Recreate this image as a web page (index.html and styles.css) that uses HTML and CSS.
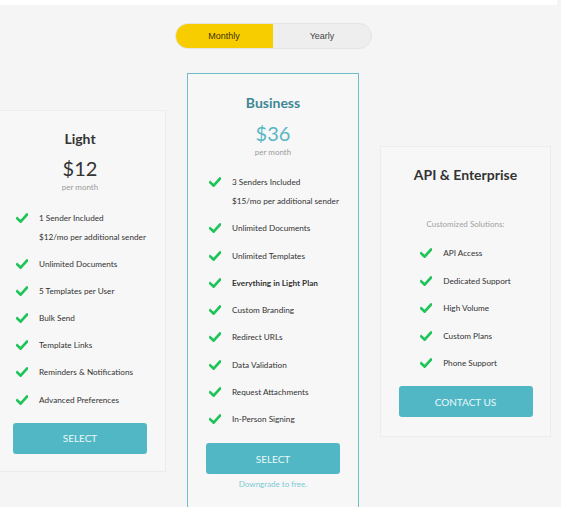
FILE: index.html
```html
<!DOCTYPE html>
<html lang="en">
<head>
<meta charset="utf-8">
<title>Pricing</title>
<link rel="stylesheet" href="styles.css">
</head>
<body>
<div class="topbar"></div>
<div class="page">
  <div class="toggle">
    <span class="opt opt-active">Monthly</span>
    <span class="opt">Yearly</span>
  </div>
  <div class="plans">
    <section class="plan plan-light">
      <h2 class="plan-title">Light</h2>
      <div class="price">$12</div>
      <div class="period">per month</div>
      <ul class="features">
        <li><svg class="check" viewBox="0 0 12 10"><path d="M1.2 5.4 L4.6 8.6 L11 1.6"/></svg><div><div>1 Sender Included</div><div class="sub">$12/mo per additional sender</div></div></li>
        <li><svg class="check" viewBox="0 0 12 10"><path d="M1.2 5.4 L4.6 8.6 L11 1.6"/></svg><div>Unlimited Documents</div></li>
        <li><svg class="check" viewBox="0 0 12 10"><path d="M1.2 5.4 L4.6 8.6 L11 1.6"/></svg><div>5 Templates per User</div></li>
        <li><svg class="check" viewBox="0 0 12 10"><path d="M1.2 5.4 L4.6 8.6 L11 1.6"/></svg><div>Bulk Send</div></li>
        <li><svg class="check" viewBox="0 0 12 10"><path d="M1.2 5.4 L4.6 8.6 L11 1.6"/></svg><div>Template Links</div></li>
        <li><svg class="check" viewBox="0 0 12 10"><path d="M1.2 5.4 L4.6 8.6 L11 1.6"/></svg><div>Reminders &amp; Notifications</div></li>
        <li><svg class="check" viewBox="0 0 12 10"><path d="M1.2 5.4 L4.6 8.6 L11 1.6"/></svg><div>Advanced Preferences</div></li>
      </ul>
      <button class="btn">SELECT</button>
    </section>

    <section class="plan plan-business">
      <h2 class="plan-title">Business</h2>
      <div class="price">$36</div>
      <div class="period">per month</div>
      <ul class="features">
        <li><svg class="check" viewBox="0 0 12 10"><path d="M1.2 5.4 L4.6 8.6 L11 1.6"/></svg><div><div>3 Senders Included</div><div class="sub">$15/mo per additional sender</div></div></li>
        <li><svg class="check" viewBox="0 0 12 10"><path d="M1.2 5.4 L4.6 8.6 L11 1.6"/></svg><div>Unlimited Documents</div></li>
        <li><svg class="check" viewBox="0 0 12 10"><path d="M1.2 5.4 L4.6 8.6 L11 1.6"/></svg><div>Unlimited Templates</div></li>
        <li><svg class="check" viewBox="0 0 12 10"><path d="M1.2 5.4 L4.6 8.6 L11 1.6"/></svg><div class="strong">Everything in Light Plan</div></li>
        <li><svg class="check" viewBox="0 0 12 10"><path d="M1.2 5.4 L4.6 8.6 L11 1.6"/></svg><div>Custom Branding</div></li>
        <li><svg class="check" viewBox="0 0 12 10"><path d="M1.2 5.4 L4.6 8.6 L11 1.6"/></svg><div>Redirect URLs</div></li>
        <li><svg class="check" viewBox="0 0 12 10"><path d="M1.2 5.4 L4.6 8.6 L11 1.6"/></svg><div>Data Validation</div></li>
        <li><svg class="check" viewBox="0 0 12 10"><path d="M1.2 5.4 L4.6 8.6 L11 1.6"/></svg><div>Request Attachments</div></li>
        <li><svg class="check" viewBox="0 0 12 10"><path d="M1.2 5.4 L4.6 8.6 L11 1.6"/></svg><div>In-Person Signing</div></li>
      </ul>
      <button class="btn">SELECT</button>
      <a class="downgrade" href="#">Downgrade to free.</a>
    </section>

    <section class="plan plan-enterprise">
      <h2 class="plan-title">API &amp; Enterprise</h2>
      <div class="custom">Customized Solutions:</div>
      <ul class="features features-centered">
        <li><svg class="check" viewBox="0 0 12 10"><path d="M1.2 5.4 L4.6 8.6 L11 1.6"/></svg><div>API Access</div></li>
        <li><svg class="check" viewBox="0 0 12 10"><path d="M1.2 5.4 L4.6 8.6 L11 1.6"/></svg><div>Dedicated Support</div></li>
        <li><svg class="check" viewBox="0 0 12 10"><path d="M1.2 5.4 L4.6 8.6 L11 1.6"/></svg><div>High Volume</div></li>
        <li><svg class="check" viewBox="0 0 12 10"><path d="M1.2 5.4 L4.6 8.6 L11 1.6"/></svg><div>Custom Plans</div></li>
        <li><svg class="check" viewBox="0 0 12 10"><path d="M1.2 5.4 L4.6 8.6 L11 1.6"/></svg><div>Phone Support</div></li>
      </ul>
      <button class="btn">CONTACT US</button>
    </section>
  </div>
</div>
</body>
</html>
```

FILE: styles.css
```css
* { box-sizing: border-box; }

html, body {
  margin: 0;
  padding: 0;
  background: #f5f5f5;
  font-family: Lato, "Open Sans", "Liberation Sans", sans-serif;
  color: #333;
  overflow: hidden;
}

.topbar {
  width: 557px;
  height: 5px;
  background: #ffffff;
}

.page {
  width: 547px;
  padding-top: 18px;
}

.toggle {
  display: flex;
  width: 197px;
  height: 26px;
  margin: 0 auto;
  border-radius: 13px;
  overflow: hidden;
  background: #eeeeee;
  border: 1px solid #e4e4e4;
  font-family: "Liberation Sans", Arial, sans-serif;
  font-size: 9px;
}

.opt {
  flex: 1;
  display: flex;
  align-items: center;
  justify-content: center;
  color: #444;
}

.opt-active {
  background: #f8cd00;
  color: #3a3300;
  margin: -1px 0 -1px -1px;
}

.plans {
  display: flex;
  align-items: flex-start;
  gap: 21px;
  margin-top: 24px;
  margin-left: -6px;
}

.plan {
  flex: none;
  width: 172px;
  background: #f7f7f7;
  border: 1px solid #ececec;
  text-align: center;
  padding: 19px 0 17px;
}

.plan-light { margin-top: 37px; }

.plan-business {
  border: 1.5px solid #6fbeca;
  padding-top: 20px;
  padding-bottom: 60px;
}

.plan-enterprise {
  width: 171px;
  margin-top: 73px;
  padding-bottom: 19px;
}

.plan-title {
  margin: 0;
  font-size: 14px;
  line-height: 18px;
  font-weight: 700;
  color: #333;
}

.plan-business .plan-title { color: #3e8895; }

.price {
  margin-top: 8px;
  font-size: 20px;
  line-height: 24px;
  color: #333;
}

.plan-business .price {
  color: #59b6c4;
  margin-top: 9px;
}

.period {
  margin-top: 2px;
  font-size: 8px;
  line-height: 10px;
  color: #9a9a9a;
}

.custom {
  margin-top: 35px;
  font-size: 8px;
  line-height: 10px;
  color: #a0a0a0;
}

.features {
  list-style: none;
  margin: 19px 0 0;
  padding: 0 0 0 21px;
  text-align: left;
  font-size: 8.2px;
  line-height: 12px;
  color: #333;
}

.plan-light .features { margin-top: 20px; }

.features li {
  display: flex;
  align-items: flex-start;
  gap: 11px;
  margin-bottom: 15.3px;
}

.features li:last-child { margin-bottom: 0; }

.plan-light .features li { margin-bottom: 15.1px; }

.features-centered {
  display: inline-block;
  margin-top: 18px;
  padding-left: 0;
}

.features-centered li { margin-bottom: 15.5px; }

.check {
  flex: none;
  width: 12px;
  height: 10px;
  margin-top: 1px;
  fill: none;
  stroke: #1fc458;
  stroke-width: 2.7;
  stroke-linecap: square;
  stroke-linejoin: miter;
}

.sub { margin-top: 7px; }

.strong { font-weight: 700; }

.btn {
  display: block;
  width: 134px;
  height: 31px;
  margin: 18px auto 0;
  border: none;
  border-radius: 3px;
  background: #52b7c5;
  color: #eaf7f9;
  font-family: Lato, "Open Sans", sans-serif;
  font-size: 10px;
  padding: 0;
}

.plan-light .btn { margin-top: 17px; }

.plan-enterprise .btn { margin-top: 15px; }

.downgrade {
  display: block;
  margin-top: 4px;
  font-size: 8px;
  line-height: 12px;
  color: #7ccad5;
  text-decoration: none;
}
```
